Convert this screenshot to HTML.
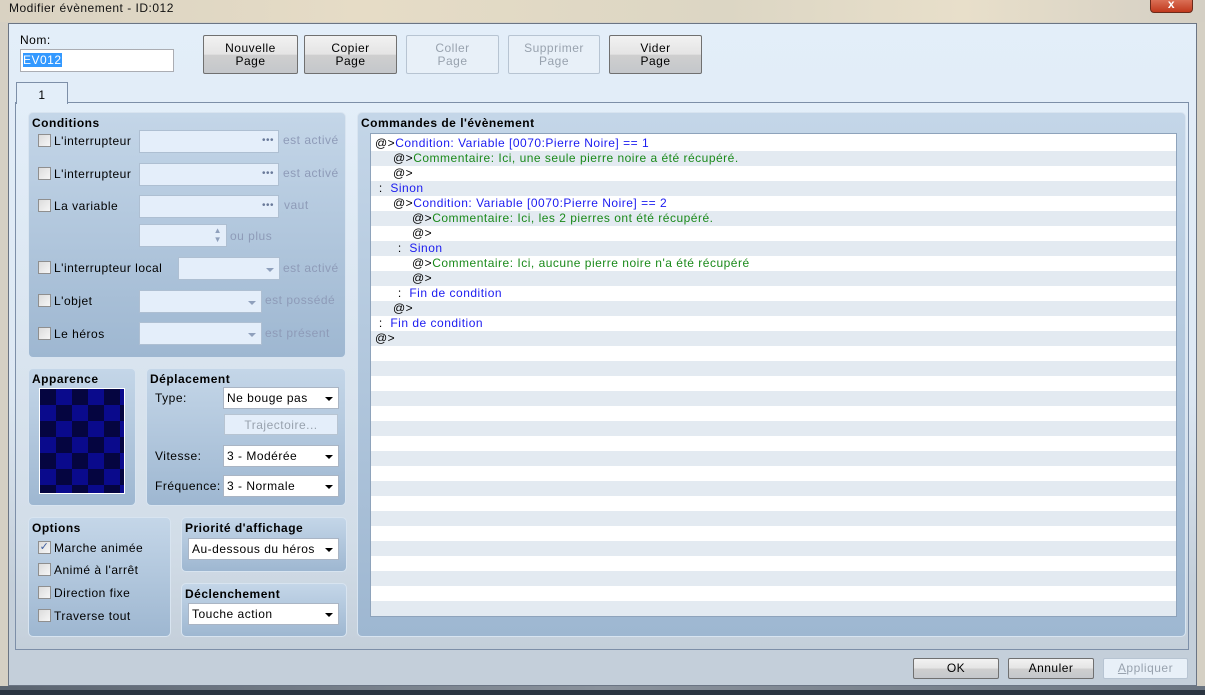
<!DOCTYPE html>
<html><head><meta charset="utf-8"><style>
*{box-sizing:border-box;margin:0;padding:0}
body{width:1205px;height:695px;overflow:hidden;position:relative;font-family:"Liberation Sans","DejaVu Sans",sans-serif;font-size:12px;letter-spacing:0.5px;color:#000;background:#2a3440}
.a{position:absolute}
#title{left:0;top:0;width:1205px;height:24px;background:linear-gradient(90deg,#d9d2c2,#e6dcc6 30%,#dcd6c4 60%,#e8dfca 80%,#d4cfc4);}
#frame{left:0;top:22px;width:1205px;height:668px;background:#d5d0c4}
#client{left:8px;top:23px;width:1189px;height:663px;border:1px solid #6b7584;background:linear-gradient(#e3eef9,#dde8f3 55%,#c4cfda 85%,#c4cfda)}
.btn{position:absolute;border:1px solid #707070;border-radius:2px;background:linear-gradient(#f2f2f2,#e4e4e4 50%,#cfcfcf 51%,#c4c7cb);text-align:center;line-height:13px;font-size:12px}
.btn.d{background:#e8f0f8;border-color:#b7c4d2;color:#98a2ae}
.grp{position:absolute;border-radius:5px;background:linear-gradient(#c4d6e8,#9eb7d1);border:1px solid #d8e4f0}
.grp b{position:absolute;left:3px;top:3px;font-size:12px}
.cb{position:absolute;width:13px;height:13px;border:1px solid #8f8f8f;background:linear-gradient(135deg,#dcdcdc,#f6f6f6)}
.lbl{position:absolute;white-space:nowrap}
.g{color:#8e9bb8}
.fld{position:absolute;height:23px;border:1px solid #aebfd2;background:#e4eefa}
.sel{position:absolute;height:22px;border:1px solid #aab5c4;background:#fff;padding:3px 0 0 3px}
.sel:after{content:"";position:absolute;right:5px;top:9px;border:4px solid transparent;border-top:4px solid #000;border-bottom:0}
.fld.dd:after{content:"";position:absolute;right:5px;top:10px;border:4px solid transparent;border-top:4px solid #8fa0bc;border-bottom:0}
.dots{position:absolute;right:4px;top:4px;color:#6a7a9a;font-size:10px}
#list{left:370px;top:133px;width:807px;height:484px;border:1px solid #8ea3bb;background:repeating-linear-gradient(#fff 0 15px,#e3eaf1 15px 30px);background-position:0 2px}
.row{white-space:nowrap;height:15px;line-height:15px}
.b{color:#1b1bf0}.gr{color:#1a8a1a}
</style></head><body>
<div id="title" class="a"></div>
<div class="a" style="left:9px;top:1px;font-size:12px;color:#111">Modifier évènement - ID:012</div>
<div class="a" style="left:1150px;top:-4px;width:43px;height:17px;border:1px solid #6b2a1a;border-radius:0 0 4px 4px;background:linear-gradient(#e07d64,#c1391d);color:#fff;text-align:center;font-weight:bold;line-height:14px">x</div>
<div id="frame" class="a"></div>
<div id="client" class="a"></div>
<div class="a" style="left:20px;top:33px">Nom:</div>
<div class="a" style="left:20px;top:49px;width:154px;height:23px;border:1px solid #abadb3;background:#fff;padding:3px 0 0 2px"><span style="background:#3399ff;color:#fff">EV012</span></div>
<div class="btn" style="left:203px;top:35px;width:95px;height:39px;padding-top:6px">Nouvelle<br>Page</div>
<div class="btn" style="left:304px;top:35px;width:93px;height:39px;padding-top:6px">Copier<br>Page</div>
<div class="btn d" style="left:406px;top:35px;width:93px;height:39px;padding-top:6px">Coller<br>Page</div>
<div class="btn d" style="left:508px;top:35px;width:92px;height:39px;padding-top:6px">Supprimer<br>Page</div>
<div class="btn" style="left:609px;top:35px;width:93px;height:39px;padding-top:6px">Vider<br>Page</div>
<div class="a" style="left:15px;top:102px;width:1174px;height:548px;border:1px solid #7d8fa8;background:linear-gradient(#e3eef9,#d2dde8 80%,#c4cfda)"></div>
<div class="a" style="left:16px;top:82px;width:52px;height:22px;border:1px solid #7d8fa8;border-bottom:none;background:#e3eef9;text-align:center;padding-top:5px">1</div>
<div class="grp" style="left:28px;top:112px;width:318px;height:246px"><b>Conditions</b></div>
<div class="cb" style="left:38px;top:134px"></div><div class="lbl" style="left:54px;top:134px">L'interrupteur</div>
<div class="fld" style="left:139px;top:130px;width:140px"><span class="dots">•••</span></div><div class="lbl g" style="left:283px;top:133px">est activé</div>
<div class="cb" style="left:38px;top:167px"></div><div class="lbl" style="left:54px;top:167px">L'interrupteur</div>
<div class="fld" style="left:139px;top:163px;width:140px"><span class="dots">•••</span></div><div class="lbl g" style="left:283px;top:166px">est activé</div>
<div class="cb" style="left:38px;top:199px"></div><div class="lbl" style="left:54px;top:199px">La variable</div>
<div class="fld" style="left:139px;top:195px;width:140px"><span class="dots">•••</span></div><div class="lbl g" style="left:284px;top:198px">vaut</div>
<div class="fld" style="left:139px;top:224px;width:88px"><span class="a" style="right:4px;top:1px;color:#8fa0bc;font-size:8px;line-height:9px">▲<br>▼</span></div><div class="lbl g" style="left:230px;top:229px">ou plus</div>
<div class="cb" style="left:38px;top:261px"></div><div class="lbl" style="left:54px;top:261px">L'interrupteur local</div>
<div class="fld dd" style="left:178px;top:257px;width:102px"></div><div class="lbl g" style="left:283px;top:261px">est activé</div>
<div class="cb" style="left:38px;top:294px"></div><div class="lbl" style="left:54px;top:294px">L'objet</div>
<div class="fld dd" style="left:139px;top:290px;width:123px"></div><div class="lbl g" style="left:265px;top:293px">est possédé</div>
<div class="cb" style="left:38px;top:327px"></div><div class="lbl" style="left:54px;top:327px">Le héros</div>
<div class="fld dd" style="left:139px;top:322px;width:123px"></div><div class="lbl g" style="left:265px;top:326px">est présent</div>
<div class="grp" style="left:28px;top:368px;width:108px;height:138px"><b>Apparence</b></div>
<div class="a" style="left:39px;top:388px;width:86px;height:106px;border:1px solid #fff;background-color:#050540;background-image:linear-gradient(45deg,#0a0a8c 25%,transparent 25%,transparent 75%,#0a0a8c 75%),linear-gradient(45deg,#0a0a8c 25%,transparent 25%,transparent 75%,#0a0a8c 75%);background-size:32px 32px;background-position:0 0,16px 16px"></div>
<div class="grp" style="left:146px;top:368px;width:200px;height:138px"><b>Déplacement</b></div>
<div class="lbl" style="left:155px;top:391px">Type:</div>
<div class="sel" style="left:223px;top:387px;width:116px">Ne bouge pas</div>
<div class="a" style="left:224px;top:414px;width:114px;height:21px;border:1px solid #b7c4d2;background:#e4eefa;color:#98a2ae;text-align:center;padding-top:3px">Trajectoire...</div>
<div class="lbl" style="left:155px;top:449px">Vitesse:</div>
<div class="sel" style="left:223px;top:445px;width:116px">3 - Modérée</div>
<div class="lbl" style="left:155px;top:479px">Fréquence:</div>
<div class="sel" style="left:223px;top:475px;width:116px">3 - Normale</div>
<div class="grp" style="left:28px;top:517px;width:143px;height:120px"><b>Options</b></div>
<div class="cb" style="left:38px;top:541px;font-size:11px;line-height:11px;color:#4060a0;text-align:center">✓</div><div class="lbl" style="left:54px;top:541px">Marche animée</div>
<div class="cb" style="left:38px;top:563px"></div><div class="lbl" style="left:54px;top:563px">Animé à l'arrêt</div>
<div class="cb" style="left:38px;top:586px"></div><div class="lbl" style="left:54px;top:586px">Direction fixe</div>
<div class="cb" style="left:38px;top:609px"></div><div class="lbl" style="left:54px;top:609px">Traverse tout</div>
<div class="grp" style="left:181px;top:517px;width:166px;height:55px"><b>Priorité d'affichage</b></div>
<div class="sel" style="left:188px;top:538px;width:151px">Au-dessous du héros</div>
<div class="grp" style="left:181px;top:583px;width:166px;height:54px"><b>Déclenchement</b></div>
<div class="sel" style="left:188px;top:603px;width:151px">Touche action</div>
<div class="grp" style="left:357px;top:112px;width:829px;height:525px"><b>Commandes de l'évènement</b></div>
<div id="list" class="a"></div>
<div class="a" style="left:375px;top:136px;line-height:15px">
<div class="row">@&gt;<span class="b">Condition: Variable [0070:Pierre Noire] == 1</span></div>
<div class="row" style="padding-left:18px">@&gt;<span class="gr">Commentaire: Ici, une seule pierre noire a été récupéré.</span></div>
<div class="row" style="padding-left:18px">@&gt;</div>
<div class="row">&nbsp;:&nbsp; <span class="b">Sinon</span></div>
<div class="row" style="padding-left:18px">@&gt;<span class="b">Condition: Variable [0070:Pierre Noire] == 2</span></div>
<div class="row" style="padding-left:37px">@&gt;<span class="gr">Commentaire: Ici, les 2 pierres ont été récupéré.</span></div>
<div class="row" style="padding-left:37px">@&gt;</div>
<div class="row" style="padding-left:19px">&nbsp;:&nbsp; <span class="b">Sinon</span></div>
<div class="row" style="padding-left:37px">@&gt;<span class="gr">Commentaire: Ici, aucune pierre noire n'a été récupéré</span></div>
<div class="row" style="padding-left:37px">@&gt;</div>
<div class="row" style="padding-left:19px">&nbsp;:&nbsp; <span class="b">Fin de condition</span></div>
<div class="row" style="padding-left:18px">@&gt;</div>
<div class="row">&nbsp;:&nbsp; <span class="b">Fin de condition</span></div>
<div class="row">@&gt;</div>
</div>
<div class="btn" style="left:913px;top:658px;width:86px;height:21px;padding-top:3px">OK</div>
<div class="btn" style="left:1008px;top:658px;width:86px;height:21px;padding-top:3px">Annuler</div>
<div class="btn d" style="left:1103px;top:658px;width:85px;height:21px;padding-top:3px"><u>A</u>ppliquer</div>
<div class="a" style="left:0;top:686px;width:1205px;height:4px;background:linear-gradient(90deg,#5a6470,#8a929c,#6a7480)"></div>
</body></html>
